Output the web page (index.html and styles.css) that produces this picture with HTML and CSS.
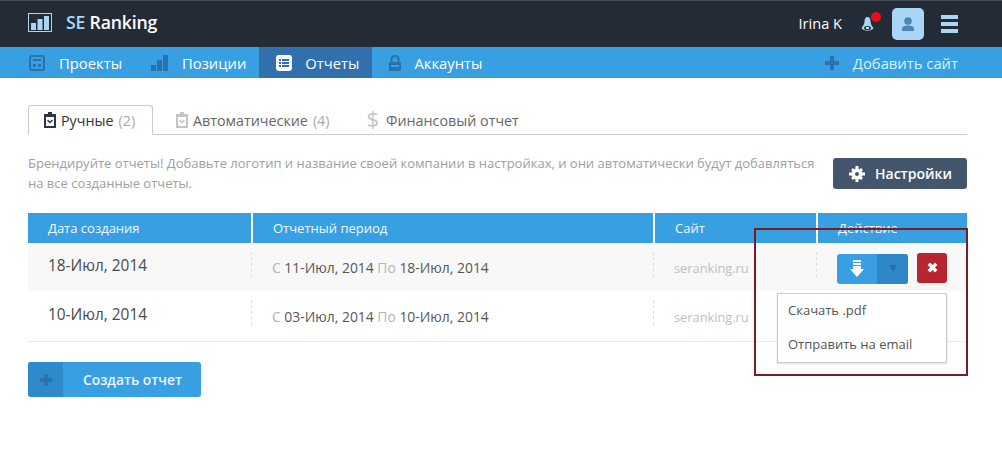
FILE: index.html
```html
<!DOCTYPE html>
<html lang="ru">
<head>
<meta charset="utf-8">
<title>SE Ranking</title>
<link rel="stylesheet" href="styles.css">
</head>
<body>
<header class="top">
  <div class="brand">
    <svg class="logo" width="24" height="19" viewBox="0 0 24 19"><rect x=".5" y=".5" width="23" height="18" fill="none" stroke="#a9d6f5"/><rect x="3" y="10" width="5" height="7" fill="#a9d6f5"/><rect x="9.500" y="6" width="5" height="11" fill="#a9d6f5"/><rect x="16" y="3" width="5" height="14" fill="#a9d6f5"/></svg>
    <span class="brand-text"><span class="se">SE</span> Ranking</span>
  </div>
  <div class="user">
    <span class="user-name">Irina K</span>
    <span class="bell">
      <svg width="13" height="15" viewBox="0 0 13 15"><path d="M6.500 0C4.500 0 3.500 2 3.500 4.500 3.500 7 2 9 .5 11 2.500 14.500 10.500 14.500 12.500 11 11 9 9.500 7 9.500 4.500 9.500 2 8.500 0 6.500 0Z" fill="#a9d6f5"/><ellipse cx="6.500" cy="11" rx="3.500" ry="2" fill="#222b36"/><ellipse cx="6.500" cy="11" rx="1.800" ry="1.100" fill="#fff"/></svg>
      <i class="dot"></i>
    </span>
    <span class="avatar"><svg width="14" height="14" viewBox="0 0 14 14"><circle cx="7" cy="4" r="3.800" fill="#4d86b4"/><path d="M1 14V11.500C1 9.500 4 8.500 7 8.500S13 9.500 13 11.500V14Z" fill="#4d86b4"/></svg></span>
    <span class="burger"><i></i><i></i><i></i></span>
  </div>
</header>
<nav class="nav">
  <a class="nav-item"><svg width="16" height="16" viewBox="0 0 16 16"><rect x="1" y="1" width="14" height="14" rx="2" fill="none" stroke="#2a72ab" stroke-width="2"/><rect x="4" y="4" width="8" height="2" fill="#2a72ab"/><rect x="4" y="9" width="3" height="3" fill="#2a72ab"/><rect x="9" y="9" width="3" height="3" fill="#2a72ab"/></svg>Проекты</a>
  <a class="nav-item"><svg width="17" height="16" viewBox="0 0 17 16"><rect y="10" width="5" height="6" fill="#2a72ab"/><rect x="6" y="5" width="5" height="11" fill="#2a72ab"/><rect x="12" width="5" height="16" fill="#2a72ab"/></svg>Позиции</a>
  <a class="nav-item active"><svg width="16" height="16" viewBox="0 0 16 16"><rect width="16" height="16" rx="3" fill="#fff"/><g fill="#3270ad"><rect x="3" y="4" width="2" height="2"/><rect x="6" y="4" width="7" height="2"/><rect x="3" y="7" width="2" height="2"/><rect x="6" y="7" width="7" height="2"/><rect x="3" y="10" width="2" height="2"/><rect x="6" y="10" width="7" height="2"/></g></svg>Отчеты</a>
  <a class="nav-item"><svg width="14" height="16" viewBox="0 0 14 16"><path d="M3.500 7V4.500C3.500 2.500 5 1 7 1S10.500 2.500 10.500 4.500V7" fill="none" stroke="#2a72ab" stroke-width="2"/><rect x="1" y="7" width="12" height="9" rx="1" fill="#2a72ab"/><rect x="3" y="10" width="8" height="2" fill="#38a0e2"/></svg>Аккаунты</a>
  <a class="nav-add"><svg width="14" height="14" viewBox="0 0 14 14"><path d="M5 0H9V5H14V9H9V14H5V9H0V5H5Z" fill="#2a72ab"/></svg>Добавить сайт</a>
</nav>
<main class="main">
  <div class="tabs">
    <a class="tab current"><svg width="12" height="16" viewBox="0 0 12 16"><path d="M4 0H8V2H12V16H0V2H4Z" fill="#2e3640"/><rect x="2" y="5" width="8" height="9" fill="#fff"/><path d="M3.500 8L6 10.500 8.500 8" fill="none" stroke="#2e3640" stroke-width="1.500"/></svg>Ручные <span class="count">(2)</span></a>
    <a class="tab"><svg width="12" height="16" viewBox="0 0 12 16"><path d="M4 0H8V2H12V16H0V2H4Z" fill="#c4c4c4"/><rect x="2" y="5" width="8" height="9" fill="#fff"/><path d="M3.500 8L6 10.500 8.500 8" fill="none" stroke="#c4c4c4" stroke-width="1.500"/></svg>Автоматические <span class="count">(4)</span></a>
    <a class="tab"><span class="dollar">$</span>Финансовый отчет</a>
  </div>
  <div class="notice">
    <p class="notice-text">Брендируйте отчеты! Добавьте логотип и название своей компании в настройках, и они автоматически будут добавляться на все созданные отчеты.</p>
    <a class="settings"><svg width="16" height="16" viewBox="0 0 16 16"><path fill-rule="evenodd" d="M8 2.500A5.500 5.500 0 1 1 8 13.500 5.500 5.500 0 1 1 8 2.500ZM8 6A2 2 0 1 0 8 10 2 2 0 1 0 8 6Z" fill="#fff"/><path d="M6.500 0H9.500V3H6.500ZM6.500 13H9.500V16H6.500ZM0 6.500H3V9.500H0ZM13 6.500H16V9.500H13ZM2 4L4 2 5.500 3.500 3.500 5.500ZM12 14L14 12 12.500 10.500 10.500 12.500ZM14 4L12 2 10.500 3.500 12.500 5.500ZM4 14L2 12 3.500 10.500 5.500 12.500Z" fill="#fff"/></svg>Настройки</a>
  </div>
  <div class="table">
    <div class="row head">
      <div class="c c1">Дата создания</div><div class="c c2">Отчетный период</div><div class="c c3">Сайт</div><div class="c c4">Действие</div>
    </div>
    <div class="row odd">
      <div class="c c1 date">18-Июл, 2014</div>
      <div class="c c2 period"><span class="mark">С</span> 11-Июл, 2014 <span class="mark">По</span> 18-Июл, 2014</div>
      <div class="c c3 site">seranking.ru</div>
      <div class="c c4 actions">
        <span class="split"><span class="dl"><svg width="14" height="17" viewBox="0 0 14 17"><rect x="3" width="8" height="2" fill="#fff"/><rect x="3" y="3" width="8" height="2" fill="#fff"/><path d="M3 6H11V9H14L7 17 0 9H3Z" fill="#fff"/></svg></span><span class="caret"><svg width="8" height="7" viewBox="0 0 8 7"><path d="M0 0H8L4 7Z" fill="#2a6ea5"/></svg></span></span>
        <span class="del"><svg width="11" height="11" viewBox="0 0 11 11"><path d="M1.800 1.800L9.200 9.200M9.200 1.800L1.800 9.200" stroke="#fff" stroke-width="3.500"/></svg></span>
      </div>
    </div>
    <div class="row">
      <div class="c c1 date">10-Июл, 2014</div>
      <div class="c c2 period"><span class="mark">С</span> 03-Июл, 2014 <span class="mark">По</span> 10-Июл, 2014</div>
      <div class="c c3 site">seranking.ru</div>
      <div class="c c4"></div>
    </div>
  </div>
  <a class="create"><span class="create-icon"><svg width="12" height="12" viewBox="0 0 12 12"><path d="M4 0H8V4H12V8H8V12H4V8H0V4H4Z" fill="#2a72ab"/></svg></span><span class="create-label">Создать отчет</span></a>
</main>
<div class="menu"><a>Скачать .pdf</a><a>Отправить на email</a></div>
<div class="highlight"></div>
</body>
</html>
```
FILE: styles.css
```css
* { box-sizing: border-box; }
html, body { margin: 0; padding: 0; }
body { width: 1002px; height: 462px; overflow: hidden; background: #fff; position: relative; font-family: "Open Sans", "Noto Sans", sans-serif; color: #444; }
svg { display: block; flex: none; }

.top { height: 47px; background: #222b36; border-top: 1px solid #474e57; display: flex; align-items: center; justify-content: space-between; padding: 0 44px 0 28px; }
.brand { display: flex; align-items: center; gap: 14px; padding-bottom: 4px; }
.brand-text { font-size: 17.700px; font-weight: 600; color: #fff; letter-spacing: -.2px; }
.se { color: #a9d6f5; }
.user { display: flex; align-items: center; }
.user-name { font-size: 14.600px; color: #fff; margin-right: 19px; margin-top: -3px; margin-left: -1px; }
.bell { position: relative; margin-right: 18px; }
.dot { position: absolute; left: 10px; top: -5px; width: 10px; height: 10px; border-radius: 50%; background: #e8101e; }
.avatar { width: 32px; height: 32px; border-radius: 5px; background: #a9d6f5; display: flex; align-items: center; justify-content: center; margin-right: 17px; }
.burger { display: flex; flex-direction: column; gap: 3px; width: 17px; }
.burger i { height: 4px; background: #a9d6f5; }

.nav { height: 31px; background: #38a0e2; display: flex; padding-left: 13px; font-size: 14.800px; color: #fff; }
.nav-item { display: flex; align-items: center; gap: 14px; padding: 0 15px 0 16px; }
.nav-item:nth-child(2) { padding: 0 13px 0 14px; }
.nav-item.active { background: #3270ad; padding: 0 13px 0 17px; gap: 13px; }
.nav-item:nth-child(4) { padding-left: 16px; gap: 12px; }
.nav-add { margin-left: auto; margin-right: 44px; display: flex; align-items: center; gap: 14px; color: #d2f3fc; }

.main { padding: 27px 35px 0 28px; }
.tabs { display: flex; height: 30px; border-bottom: 1px solid #ccc; font-size: 14.300px; color: #666; }
.tab { display: flex; align-items: center; gap: 5px; height: 30px; padding: 0 0 0 16px; margin-right: 21px; }
.tab.current { width: 125px; border: 1px solid #ccc; border-bottom-color: #fff; border-radius: 3px 3px 0 0; color: #333; background: #fff; padding-left: 15px; margin-right: 7px; }
.count { color: #aaa; }
.dollar { font-size: 22px; color: #c4c4c4; margin: -4px 2px 0 0; line-height: 1; }

.notice { display: flex; justify-content: space-between; align-items: flex-start; margin-top: 18px; }
.notice-text { margin: 0; width: 800px; font-size: 13px; line-height: 20px; color: #a0a0a0; }
.settings { width: 134px; height: 31px; margin-top: 5px; background: #43566c; border-radius: 3px; color: #fff; display: flex; align-items: center; gap: 10px; padding-left: 16px; font-size: 14px; font-weight: 600; }

.table { margin-top: 20px; }
.row { display: flex; height: 51px; align-items: center; font-size: 13px; color: #555; }
.row:last-child { border-bottom: 1px solid #e8e8e8; }
.odd { height: 48px; background: #f8f8f8; }
.head { height: 30px; background: #38a0e2; color: #f0f9fe; }
.c { position: relative; padding-left: 20px; height: 100%; display: flex; align-items: center; white-space: pre; }
.c1 { width: 223px; }
.c2 { width: 402px; }
.c3 { width: 163px; }
.c4 { width: 151px; }
.head .c2, .head .c3, .head .c4 { border-left: 2px solid #fff; padding-left: 20px; }
.row:not(.head) .c2, .row:not(.head) .c3, .row:not(.head) .c4 { padding-left: 21px; }
.row:not(.head) .c2::before, .row:not(.head) .c3::before, .row:not(.head) .c4::before { content: ""; position: absolute; left: 0; top: 9px; height: 25px; border-left: 1px dashed #ddd; }
.date { font-size: 15.400px; padding-bottom: 3px; color: #4a4a4a; }
.period { font-size: 13.900px; padding-top: 1px; }
.mark { color: #b5b5b5; }
.site { color: #c0c0c0; font-size: 12.800px; padding-top: 1px; }
.actions { gap: 9px; padding-top: 3px; }
.split { display: flex; width: 71px; height: 30px; border-radius: 3px; overflow: hidden; background: #38a0e2; }
.dl { width: 40px; display: flex; align-items: center; justify-content: center; }
.caret { flex: 1; background: #2f86c8; display: flex; align-items: center; justify-content: center; }
.del { width: 30px; height: 30px; margin-top: -2px; background: #b8242f; border-radius: 3px; display: flex; align-items: center; justify-content: center; }

.create { margin-top: 20px; width: 173px; height: 35px; display: flex; border-radius: 3px; overflow: hidden; background: #38a0e2; color: #eaf7fe; font-size: 13.800px; font-weight: 600; }
.create-icon { width: 35px; background: #2f8acb; display: flex; align-items: center; justify-content: center; }
.create-label { padding-left: 20px; display: flex; align-items: center; }

.menu { position: absolute; left: 777px; top: 293px; width: 170px; height: 70px; background: #fff; border: 1px solid #ccc; box-shadow: 0 1px 2px rgba(0,0,0,.15); display: flex; flex-direction: column; font-size: 13px; color: #555; padding: 0 10px; }
.menu a { height: 32px; display: flex; align-items: center; }
.menu a + a { height: 36px; }
.highlight { position: absolute; left: 754px; top: 228px; width: 214px; height: 148px; border: 2px solid #7f1a22; }
```
